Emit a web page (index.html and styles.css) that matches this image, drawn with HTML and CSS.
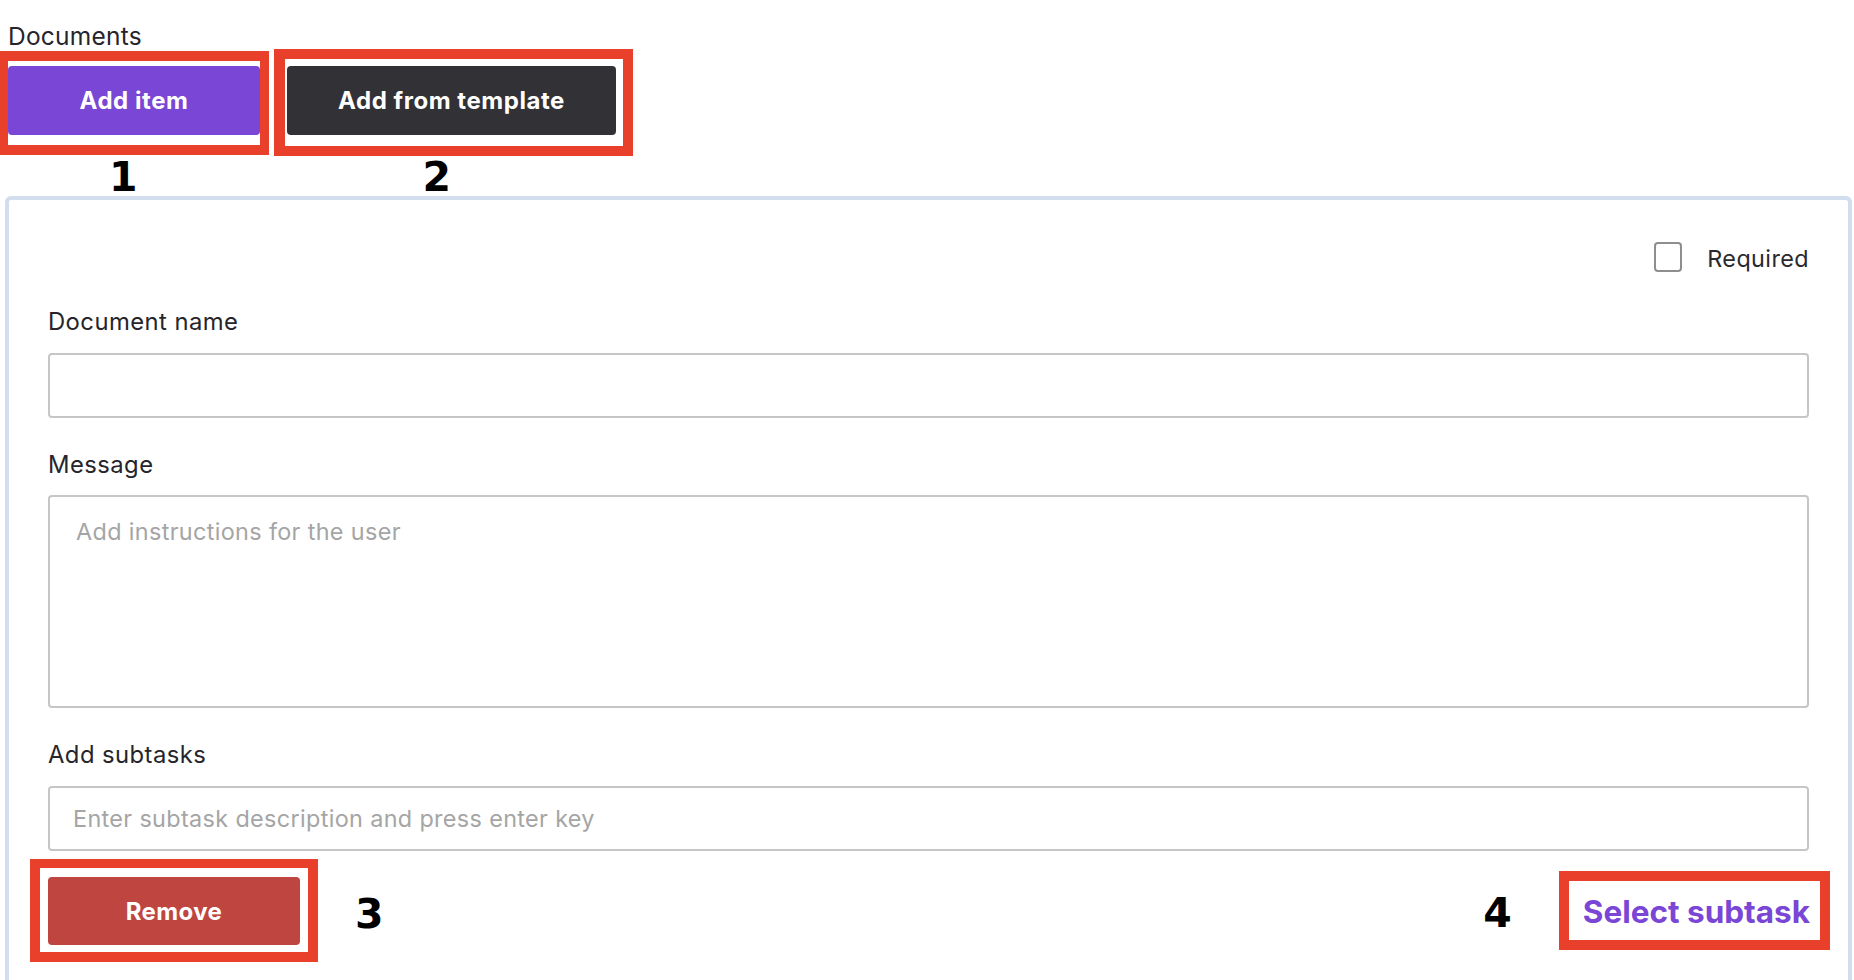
FILE: index.html
```html
<!DOCTYPE html>
<html lang="en">
<head>
<meta charset="utf-8">
<title>Documents</title>
<link rel="stylesheet" href="styles.css">
</head>
<body>
<div class="page">
  <div class="section-title">Documents</div>
  <div class="toolbar">
    <div class="mark mark-1"><button class="btn btn-primary" type="button">Add item</button></div>
    <div class="mark mark-2"><button class="btn btn-dark" type="button">Add from template</button></div>
  </div>
  <div class="step-row"><span class="step step-1">1</span><span class="step step-2">2</span></div>
  <div class="card">
    <div class="required-row">
      <label class="check"><span class="checkbox"></span><span class="check-text">Required</span></label>
    </div>
    <div class="field field-first">
      <div class="field-label">Document name</div>
      <input class="control control-input" type="text">
    </div>
    <div class="field">
      <div class="field-label">Message</div>
      <textarea class="control control-area" placeholder="Add instructions for the user"></textarea>
    </div>
    <div class="field">
      <div class="field-label">Add subtasks</div>
      <input class="control control-input control-sub" type="text" placeholder="Enter subtask description and press enter key">
    </div>
    <div class="actions">
      <div class="mark mark-3"><button class="btn btn-danger" type="button">Remove</button></div>
      <span class="step step-3">3</span>
      <span class="spacer"></span>
      <span class="step step-4">4</span>
      <div class="mark mark-4"><span class="link">Select subtask</span></div>
    </div>
  </div>
</div>
</body>
</html>
```
FILE: styles.css
```css
html, body {
  margin: 0;
  padding: 0;
  height: 980px;
  overflow: hidden;
  background: #ffffff;
}

body {
  font-family: Inter, "Liberation Sans", sans-serif;
  color: #26252b;
}

.page {
  padding-top: 23px;
}

.section-title {
  margin-left: 8px;
  font-size: 24.5px;
  letter-spacing: 0.25px;
  line-height: 26px;
  height: 26px;
}

.toolbar {
  display: flex;
  align-items: flex-start;
  gap: 5px;
}

.mark {
  border: 10px solid #E8402A;
  background: #ffffff;
}

.mark-1 {
  margin-top: 2px;
  border-width: 10px 9px 10px 8px;
  padding: 5px 0 10px 0;
}

.mark-2 {
  border-width: 10px 10px 10px 11px;
  padding: 7px 7px 11px 2px;
}

.btn {
  display: block;
  border: 0;
  border-radius: 4px;
  padding: 0;
  width: 252px;
  height: 69px;
  font-family: inherit;
  font-weight: 700;
  font-size: 24px;
  letter-spacing: 0.55px;
  color: #ffffff;
  cursor: pointer;
}

.btn-primary {
  background: #7A46D5;
}

.btn-dark {
  width: 329px;
  background: #323136;
}

.btn-danger {
  height: 68px;
  letter-spacing: 0.4px;
  background: #BF4540;
}

.step-row {
  display: flex;
  height: 40px;
}

.step {
  font-family: "DejaVu Sans", sans-serif;
  font-weight: 700;
  font-size: 41px;
  line-height: 43px;
  color: #000000;
}

.step-1 {
  margin-left: 109px;
}

.step-2 {
  margin-left: 285px;
}

.card {
  margin-left: 5px;
  width: 1847px;
  box-sizing: border-box;
  border: 4px solid #D2DEEE;
  border-bottom: 0;
  border-radius: 6px 6px 0 0;
  padding: 42px 39px 18px 39px;
}

.required-row {
  display: flex;
  justify-content: flex-end;
  height: 30px;
  margin-bottom: 36px;
}

.check {
  display: flex;
  align-items: flex-start;
}

.checkbox {
  width: 28px;
  height: 30px;
  box-sizing: border-box;
  border: 2px solid #8E8E8E;
  border-radius: 4px;
}

.check-text {
  margin-left: 25px;
  margin-top: 1.5px;
  font-size: 23.4px;
  letter-spacing: 0.4px;
  line-height: 30px;
  color: #2a2a2e;
}

.field {
  margin-top: 33px;
}

.field-first {
  margin-top: 0;
}

.field-label {
  font-size: 23.8px;
  letter-spacing: 0.45px;
  line-height: 28px;
  height: 28px;
  margin-bottom: 16.5px;
}

.control {
  display: block;
  width: 100%;
  box-sizing: border-box;
  border: 2px solid #C6C6C6;
  border-radius: 4px;
  background: #ffffff;
  font-family: inherit;
  font-size: 23.4px;
  letter-spacing: 0.35px;
  color: #26252b;
  margin: 0;
  outline: none;
}

.control::placeholder {
  color: #A5A5A5;
  opacity: 1;
}

.control-input {
  height: 65px;
  padding: 0 23px;
}

.control-area {
  height: 213px;
  padding: 20.5px 26px;
  line-height: 28px;
  resize: none;
}

.actions {
  display: flex;
  align-items: center;
  margin-top: 8.5px;
  height: 103px;
}

.mark-3 {
  margin-left: -18px;
  border-width: 9px 10px 10px 10px;
  padding: 9px 8px 7px 8px;
}

.step-3 {
  margin-left: 37px;
  padding-top: 8.6px;
}

.spacer {
  flex: 1;
}

.step-4 {
  margin-right: 47px;
  padding-top: 6.6px;
}

.mark-4 {
  margin-right: -21px;
  height: 59px;
  display: flex;
  align-items: center;
  padding: 0 10px 0 14px;
}

.link {
  font-weight: 700;
  font-size: 31.5px;
  line-height: 59px;
  color: #7A46D5;
  padding-top: 2px;
}
```
